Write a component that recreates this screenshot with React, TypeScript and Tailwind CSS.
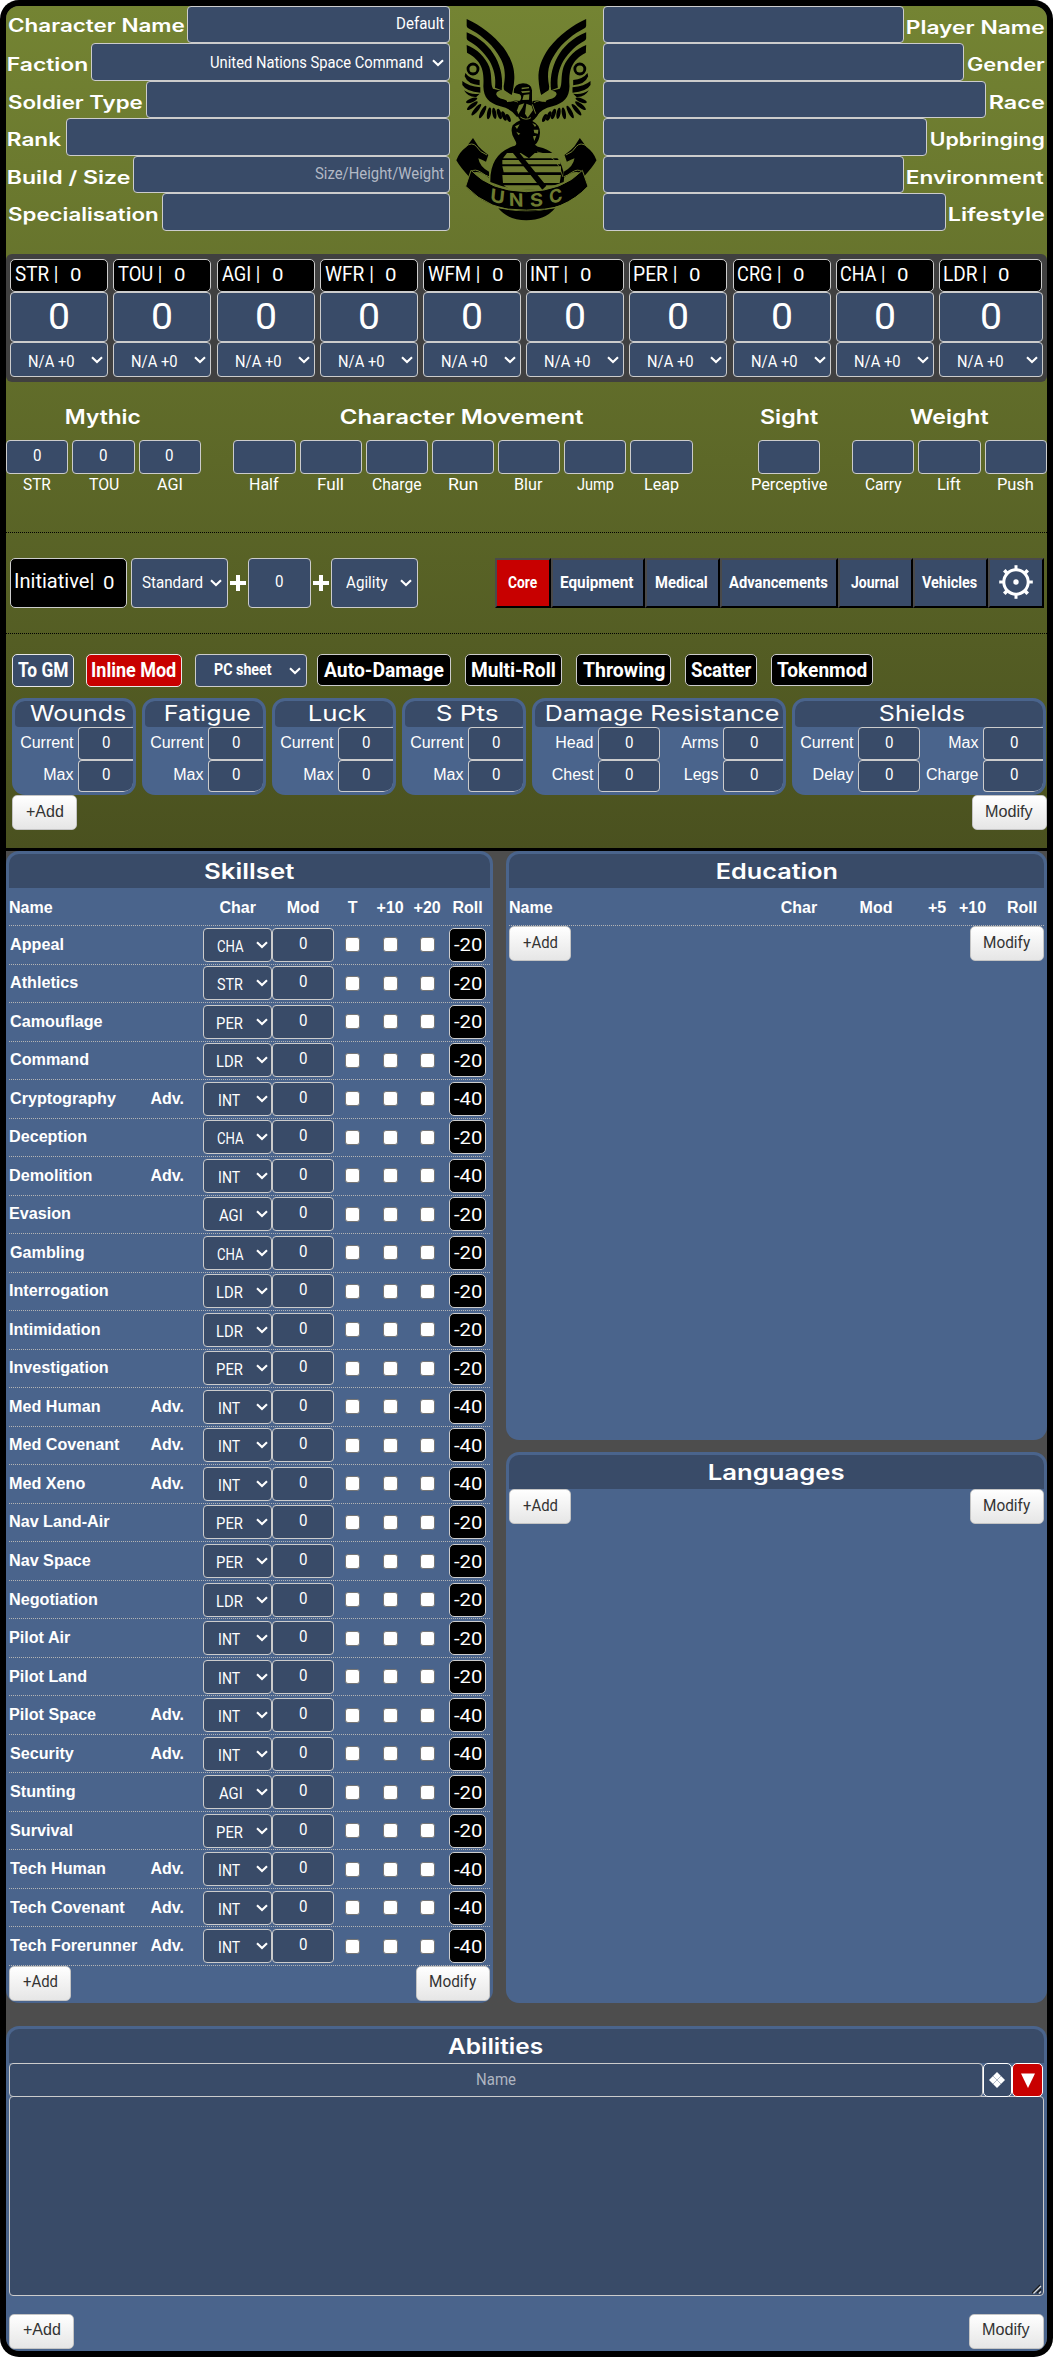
import React from "react";

/* ---------- text ---------- */

type Face = "wide" | "body" | "plain";

const FACES: Record<Face, { css: string; cls: string }> = {
  wide: { css: 'Inter, sans-serif', cls: "font-['Inter',sans-serif]" },
  body: { css: 'Roboto, sans-serif', cls: "font-['Roboto',sans-serif]" },
  plain: { css: '"Liberation Sans", sans-serif', cls: "font-['Liberation_Sans',sans-serif]" },
};

const ctx = document.createElement("canvas").getContext("2d")!;

/* A single line of text whose inked width is fitted to `w` pixels. */
function Fit({
  t,
  w,
  size = 16,
  weight = 400,
  face = "body",
  dy = 0,
  cls = "",
}: {
  t: string;
  w: number;
  size?: number;
  weight?: number;
  face?: Face;
  dy?: number;
  cls?: string;
}) {
  ctx.font = `${weight} ${size}px ${FACES[face].css}`;
  const m = ctx.measureText(t);
  const s = w / (m.actualBoundingBoxLeft + m.actualBoundingBoxRight);
  return (
    <span className={`block shrink-0 text-left leading-5 whitespace-pre ${FACES[face].cls} ${cls}`} style={{ width: w }}>
      <span
        className="inline-block origin-left"
        style={{
          fontSize: size,
          fontWeight: weight,
          transform: `translate(${m.actualBoundingBoxLeft * s}px, ${dy}px) scaleX(${s})`,
        }}
      >
        {t}
      </span>
    </span>
  );
}

const Chevron = ({ cls = "" }: { cls?: string }) => (
  <svg className={`h-[8px] w-[12px] shrink-0 ${cls}`} viewBox="0 0 12 8" fill="none" stroke="white" strokeWidth="2.1">
    <path d="M1 1.2 L6 6 L11 1.2" />
  </svg>
);

const FIELD = "border border-[#cccccc] bg-[#394b68] rounded-[4px]";
const ROLL = "border border-[#cccccc] bg-black rounded-[5px]";

/* ---------- emblem ---------- */

const OLIVE = "#6e7b30";

const WingHalf = () => (
  <g>
    <path d="M79 56 C120 74 160 105 190 142 C215 178 223 205 222 235 Q220 265 214 284 L192 270 Q190 268 190 258 C198 215 192 190 172 160 C150 126 115 100 84 84 Q79 81 79 76Z" />
    <path d="M79 96 C120 112 150 142 165 170 C184 205 188 240 184 270 L164 262 C168 232 160 204 148 183 C130 153 105 132 85 122 Q79 119 79 114Z" />
    <path d="M79 134 C110 146 135 170 147 200 C156 228 150 252 158 265 L182 271 Q166 272 168 283 Q174 298 206 298 L240 302 L240 345 L230 350 Q214 325 180 318 C145 308 130 292 129 258 C131 225 128 205 115 186 C104 170 90 163 80 157Z" />
    <circle cx="98" cy="206" r="15" fill="none" stroke="black" strokeWidth="8.5" />
    <path d="M75 218 Q88 236 118 239 V255 Q82 252 73 228Z" />
    <path d="M66 242 Q84 258 120 261 V277 Q78 274 66 254Z" />
    <path d="M71 270 Q90 284 118 280 L108 290 Q84 292 71 270Z" />
    <g>
      <ellipse cx="94" cy="300" rx="18" ry="6" transform="rotate(-22 94 300)" />
      <ellipse cx="96" cy="316" rx="20" ry="6" transform="rotate(-38 96 316)" />
      <ellipse cx="108" cy="328" rx="22" ry="6" transform="rotate(-50 108 328)" />
      <ellipse cx="127" cy="335" rx="21" ry="6" transform="rotate(-62 127 335)" />
      <ellipse cx="146" cy="339" rx="18" ry="6" transform="rotate(-80 146 339)" />
      <ellipse cx="162" cy="339" rx="17" ry="6" transform="rotate(80 162 339)" />
      <ellipse cx="177" cy="341" rx="16" ry="6" transform="rotate(72 177 341)" />
      <ellipse cx="191" cy="347" rx="15" ry="6" transform="rotate(66 191 347)" />
      <ellipse cx="204" cy="353" rx="13" ry="5.5" transform="rotate(66 204 353)" />
    </g>
    {/* side ribbon */}
    <path d="M48 480 Q56 456 78 440 L98 413 L114 438 Q124 450 144 464 L137 484 Q124 478 114 474 Q118 500 146 514 L146 532 Q116 508 96 518 L89 532 Q60 502 48 480Z" />
    <path d="M76 438 Q96 424 108 438 Q118 456 140 464 M92 514 Q104 504 122 516 Q136 526 148 530" fill="none" stroke={OLIVE} strokeWidth="3" />
    <path d="M176 276 Q196 268 206 282 Q214 292 230 294 Q212 312 194 298 Q180 290 176 276Z" fill={OLIVE} />
    <path d="M200 304 Q220 296 236 308" fill="none" stroke={OLIVE} strokeWidth="3" />
  </g>
);

const Emblem = () => (
  <svg className="h-[207px] w-[142px]" viewBox="47 50 426 621">
    <WingHalf />
    <g transform="translate(516.5 0) scale(-1 1)">
      <WingHalf />
    </g>
    <path d="M220 277 Q220 250 248 249 Q274 250 275 270 L275 306 Q292 312 300 328 Q292 350 276 362 Q300 374 299 398 Q297 424 284 433 Q292 440 296 440 Q345 450 364 496 Q374 522 370 545 Q258 590 150 545 Q148 462 218 438 Q234 434 224 420 Q208 396 217 375 Q228 364 240 360 Q222 340 232 306 L240 300 Q246 288 238 282Z" />
    <g fill={OLIVE}>
      <path d="M236 314 L252 309 L246 322 L234 342 L230 330Z" />
      <path d="M258 310 L274 316 L278 330 L262 352 L254 340Z" />
      <path d="M244 262 L266 260 L266 264 L244 267Z M242 273 L268 271 V276 L246 278Z M250 284 L267 282 L266 298 L246 299Z" />
      <path d="M224 378 L238 372 L230 386Z M228 394 L240 400 L234 404Z M276 368 L288 374 L284 380Z M280 388 L294 388 L293 400 L282 398Z M278 408 L288 406 L282 422Z" />
    </g>
    <path d="M276 312 L286 340 M240 350 Q256 362 272 352" stroke={OLIVE} strokeWidth="3" fill="none" />
    <path d="M200 458 H338 Q350 466 354 474 H188Z M186 479 H358 L361 492 H186Z M186 498 H362 V516 H190Z M186 524 H362 L358 548 H188Z M190 555 H352 L330 566 L220 570 Q196 562 190 555Z" fill={OLIVE} />
    <path d="M216 456 L236 456 L318 556 L306 568Z M232 452 L266 474 L290 452Z" />
    <path d="M290 455 Q352 462 368 530" fill="none" stroke={OLIVE} strokeWidth="2.5" />
    <path d="M92 510 Q150 572 258 574 Q368 572 426 510 L443 558 Q372 634 258 634 Q146 632 76 558Z" stroke={OLIVE} strokeWidth="3" />
    <g
      fill={OLIVE}
      fontFamily="Inter, sans-serif"
      fontWeight="700"
      fontSize="54"
      textAnchor="middle"
    >
      <text transform="translate(170 607) rotate(14) skewX(8) scale(1.12 1)">U</text>
      <text transform="translate(228 618) rotate(4) skewX(5) scale(1.06 1)">N</text>
      <text transform="translate(289 618) rotate(-5) skewX(-4) scale(1.12 1)">S</text>
      <text transform="translate(348 606) rotate(-14) skewX(-8) scale(1.02 1)">C</text>
    </g>
    <path d="M174 624 Q258 642 344 624 Q314 660 258 660 Q204 660 174 624Z" />
    <path d="M150 617 Q258 642 368 617" fill="none" stroke={OLIVE} strokeWidth="3" />
  </svg>
);

/* ---------- identity ---------- */

const LEFT: { label: string; lw: number; fw: number; h: string; body?: React.ReactNode }[] = [
  { label: "Character Name", lw: 176, fw: 263, h: "h-[37px]", body: <Fit t="Default" w={47} dy={-1.5} /> },
  {
    label: "Faction",
    lw: 79,
    fw: 359,
    h: "h-[38px]",
    body: (
      <>
        <Fit t="United Nations Space Command" w={211} dy={0.5} />
        <Chevron cls="ml-[10px] mt-[1px]" />
      </>
    ),
  },
  { label: "Soldier Type", lw: 134, fw: 304, h: "h-[37px]" },
  { label: "Rank", lw: 54, fw: 384, h: "h-[38px]" },
  {
    label: "Build / Size",
    lw: 121.5,
    fw: 317,
    h: "h-[37px]",
    body: <Fit t="Size/Height/Weight" w={129} dy={-1} cls="text-[#b3b9c5]" />,
  },
  { label: "Specialisation", lw: 149.5, fw: 288, h: "h-[38px]" },
];

const RIGHT = [
  { label: "Player Name", lw: 137, fw: 300.5, h: "h-[37px]" },
  { label: "Gender", lw: 77.5, fw: 360.5, h: "h-[38px]" },
  { label: "Race", lw: 54, fw: 382.5, h: "h-[37px]" },
  { label: "Upbringing", lw: 113.5, fw: 323.5, h: "h-[38px]" },
  { label: "Environment", lw: 137.5, fw: 300.5, h: "h-[37px]" },
  { label: "Lifestyle", lw: 95, fw: 342.5, h: "h-[38px]" },
];

const Identity = () => (
  <div className="flex h-[248px] items-start">
    <div className="w-[444px]">
      {LEFT.map((r, i) => (
        <div key={r.label} className={`flex items-center justify-between pl-[2px] ${r.h}`}>
          <Fit t={r.label} w={r.lw} size={18} weight={600} face="wide" dy={i === 0 ? 0.5 : 3} />
          <div className={`flex h-full items-center justify-end pr-[5px] ${FIELD}`} style={{ width: r.fw }}>
            {r.body}
          </div>
        </div>
      ))}
    </div>
    <div className="flex w-[153px] justify-center pt-[11px]">
      <Emblem />
    </div>
    <div className="w-[441px]">
      {RIGHT.map((r) => (
        <div key={r.label} className={`flex items-center justify-between ${r.h}`}>
          <div className={`h-full ${FIELD}`} style={{ width: r.fw }} />
          <Fit t={r.label} w={r.lw} size={18} weight={600} face="wide" dy={2.5} />
        </div>
      ))}
    </div>
    <div className="w-[3px]" />
  </div>
);

/* ---------- characteristics ---------- */

const STATS: [string, number][] = [
  ["STR |", 42.5],
  ["TOU |", 43.5],
  ["AGI |", 37.5],
  ["WFR |", 48],
  ["WFM |", 51.5],
  ["INT |", 36.5],
  ["PER |", 42.5],
  ["CRG |", 42.5],
  ["CHA |", 43.5],
  ["LDR |", 42],
];

const Stats = () => (
  <div className="flex h-[128px] gap-[5.2px] rounded-md bg-[#404040] pt-[5px] pr-[4px] pl-[4.3px]">
    {STATS.map(([s, w], i) => (
      <div key={s} className={i === 9 ? "flex-1" : "w-[98px]"}>
        <div className={`flex h-[33px] items-center pl-[4px] ${ROLL} ${i === 9 ? "mr-[1px]" : ""}`}>
          <Fit t={s} w={w} size={20} dy={-1} />
          <Fit t="0" w={10.5} size={17.5} cls="ml-[12.5px]" />
        </div>
        <div className={`flex h-[50px] items-center justify-center ${FIELD}`}>
          <Fit t="0" w={18} size={37} dy={3} />
        </div>
        <div className={`flex h-[35px] items-center pl-[18px] ${FIELD}`}>
          <Fit t="N/A +0" w={45.5} dy={1.5} />
          <Chevron cls="mr-[4px] ml-auto" />
        </div>
      </div>
    ))}
  </div>
);

/* ---------- derived values ---------- */

type Cell = [string, number, string?];

const Group = ({ title, w, cells, cls }: { title: string; w: number; cells: Cell[]; cls: string }) => (
  <div className={`flex flex-col items-center ${cls}`}>
    <div className="mt-[24px] flex h-[33px] justify-center pr-px">
      <Fit t={title} w={w} size={20} weight={600} face="wide" />
    </div>
    <div className="flex gap-[4px]">
      {cells.map(([l, lw, v]) => (
        <div key={l} className="flex w-[62.2px] flex-col items-center">
          <div className={`flex h-[34px] w-full items-center justify-center ${FIELD}`}>{v && <Fit t={v} w={8.5} dy={-1} />}</div>
          <Fit t={l} w={lw} cls="mt-[3px]" dy={-2} />
        </div>
      ))}
    </div>
  </div>
);

const Derived = () => (
  <div className="flex h-[150px] items-start">
    <Group title="Mythic" w={74} cls="w-[195px] pt-[1px]" cells={[["STR", 28, "0"], ["TOU", 30, "0"], ["AGI", 24.5, "0"]]} />
    <Group
      title="Character Movement"
      w={242.5}
      cls="ml-[32px] w-[460px] pt-[1px]"
      cells={[["Half", 29], ["Full", 25], ["Charge", 49], ["Run", 28.5], ["Blur", 28], ["Jump", 37], ["Leap", 34]]}
    />
    <Group title="Sight" w={58} cls="ml-[65px] w-[62px] pt-[1px]" cells={[["Perceptive", 75]]} />
    <Group title="Weight" w={78.5} cls="ml-[32px] w-[195px] pt-[1px]" cells={[["Carry", 37], ["Lift", 22.5], ["Push", 35]]} />
  </div>
);

/* ---------- initiative and tabs ---------- */

const TABS: [string, number, string][] = [
  ["Core", 29.5, "w-[56px] bg-[#c80000]"],
  ["Equipment", 73, "w-[94px] bg-[#394b68]"],
  ["Medical", 51.5, "w-[75px] bg-[#394b68]"],
  ["Advancements", 98.5, "w-[118px] bg-[#394b68]"],
  ["Journal", 47.5, "w-[75px] bg-[#394b68]"],
  ["Vehicles", 55, "w-[75px] bg-[#394b68]"],
];

const BEVEL = "border-2 border-t-[#4a4a4a] border-l-[#4a4a4a] border-r-black border-b-black";

const Gear = () => (
  <svg className="size-[36px]" viewBox="-18 -18 36 36" fill="none" stroke="white">
    <circle r="12.2" strokeWidth="3" />
    <circle r="2.7" fill="white" stroke="none" />
    {[0, 45, 90, 135, 180, 225, 270, 315].map((a) => (
      <path key={a} d={a % 90 ? "M0 -12.5 V-16.6" : "M0 -12 V-16.8"} strokeWidth={a % 90 ? 3.6 : 3} transform={`rotate(${a})`} />
    ))}
  </svg>
);

const Plus = ({ cls }: { cls: string }) => (
  <svg className={`size-[16px] ${cls}`} viewBox="0 0 16 16" stroke="white" strokeWidth="4">
    <path d="M8 0 V16 M0 8 H16" />
  </svg>
);

const Bar = () => (
  <div className="flex h-[102px] items-center border-y border-dotted border-black pr-[3px] pl-[4px]">
    <div className={`flex h-[50px] w-[117px] items-center pl-[4px] ${ROLL}`}>
      <Fit t="Initiative|" w={78.5} size={20} dy={-1} />
      <Fit t="0" w={10.5} size={17.5} cls="ml-[9px]" dy={-0.5} />
    </div>
    <div className={`ml-[4px] flex h-[50px] w-[97px] items-center pl-[10px] ${FIELD}`}>
      <Fit t="Standard" w={60} />
      <Chevron cls="ml-[8px]" />
    </div>
    <Plus cls="ml-[2px]" />
    <div className={`ml-[2px] flex h-[50px] w-[63px] items-center justify-center ${FIELD}`}>
      <Fit t="0" w={8.5} dy={-1} />
    </div>
    <Plus cls="ml-[2px]" />
    <div className={`ml-[2px] flex h-[50px] w-[87px] items-center pl-[14px] ${FIELD}`}>
      <Fit t="Agility" w={42} />
      <Chevron cls="ml-[12px]" />
    </div>
    <div className="ml-auto flex">
      {TABS.map(([t, w, c]) => (
        <div key={t} className={`flex h-[50px] items-center justify-center pr-[1.5px] ${BEVEL} ${c}`}>
          <Fit t={t} w={w} weight={700} dy={-0.5} />
        </div>
      ))}
      <div className={`flex h-[50px] w-[56px] items-center justify-center bg-[#394b68] pb-[2px] ${BEVEL}`}>
        <Gear />
      </div>
    </div>
  </div>
);

/* ---------- toggles ---------- */

const MACROS: [string, number, string][] = [
  ["Auto-Damage", 120, "ml-[10px] w-[134px]"],
  ["Multi-Roll", 83.5, "ml-[14px] w-[97px]"],
  ["Throwing", 82, "ml-[14px] w-[95px]"],
  ["Scatter", 61, "ml-[14px] w-[72px]"],
  ["Tokenmod", 90, "ml-[14px] w-[102px]"],
];

const Toggles = () => (
  <div className="mt-[20px] flex h-[44px] items-start pl-[6px]">
    <div className="flex h-[33px] w-[62px] items-center justify-center rounded-[5px] border border-[#e8e8e8] bg-[#394b68]">
      <Fit t="To GM" w={50} size={20} weight={700} dy={0} />
    </div>
    <div className="ml-[12px] flex h-[33px] w-[96px] items-center justify-center rounded-[5px] border border-[#e8e8e8] bg-[#c80000]">
      <Fit t="Inline Mod" w={84} size={20} weight={700} dy={0} />
    </div>
    <div className={`ml-[13px] flex h-[33px] w-[112px] items-center pl-[19px] ${FIELD}`}>
      <Fit t="PC sheet" w={57} weight={700} dy={-1} />
      <Chevron cls="mr-[5px] ml-auto" />
    </div>
    {MACROS.map(([t, w, c]) => (
      <div key={t} className={`flex h-[32px] items-center justify-center ${ROLL} ${c}`}>
        <Fit t={t} w={w} size={20} weight={700} dy={0.5} />
      </div>
    ))}
  </div>
);

/* ---------- trackers ---------- */

const Label = ({ t }: { t: string }) => (
  <span className="flex-1 pr-[4.5px] pb-[2px] text-right font-['Liberation_Sans',sans-serif] text-base leading-5 whitespace-nowrap">
    {t}
  </span>
);

const Tracker = ({ title, tw, pairs, cls, last }: { title: string; tw: number; pairs: string[][]; cls: string; last: string }) => (
  <div className={`h-[97px] overflow-hidden rounded-[13px] border-[3px] border-[#4a648c] bg-[#4a648c] ${cls}`}>
    <div className="flex h-[26px] items-center justify-center rounded-t-[9px] rounded-b-[4px] bg-[#394b68] pl-[7px]">
      <Fit t={title} w={tw} size={21} weight={400} face="wide" dy={0} />
    </div>
    {pairs.map((row, r) => (
      <div key={r} className={r ? "flex h-[32px] items-center" : "flex h-[33px] items-center"}>
        {row.map((l, i) => {
          const end = i === row.length - 1;
          return (
            <React.Fragment key={l}>
              <Label t={l} />
              <div
                className={`flex h-full items-center border border-[#cccccc] bg-[#394b68] ${
                  end ? `border-r-0 rounded-l-[4px] ${last} ${r ? "rounded-br-[9px]" : ""}` : "w-[62px] justify-center rounded-[4px]"
                }`}
              >
                <Fit t="0" w={8.5} dy={-1} cls={end ? (row.length > 1 ? "ml-[26px]" : "ml-[23px]") : ""} />
              </div>
            </React.Fragment>
          );
        })}
      </div>
    ))}
  </div>
);

const SINGLE = [["Current"], ["Max"]];

const Trackers = () => (
  <div className="flex gap-[6px] pl-[6px]">
    <Tracker title="Wounds" tw={96} pairs={SINGLE} cls="w-[124px]" last="w-[55px]" />
    <Tracker title="Fatigue" tw={85.5} pairs={SINGLE} cls="w-[124px]" last="w-[55px]" />
    <Tracker title="Luck" tw={58} pairs={SINGLE} cls="w-[124px]" last="w-[55px]" />
    <Tracker title="S Pts" tw={61.5} pairs={SINGLE} cls="w-[124px]" last="w-[55px]" />
    <Tracker title="Damage Resistance" tw={233} pairs={[["Head", "Arms"], ["Chest", "Legs"]]} cls="w-[254px]" last="w-[60px]" />
    <Tracker title="Shields" tw={85} pairs={[["Current", "Max"], ["Delay", "Charge"]]} cls="w-[254px]" last="w-[60px]" />
  </div>
);

/* ---------- add / modify ---------- */

const BTN =
  "flex h-[35px] items-center justify-center rounded-[5px] border border-[#c4c4c4] bg-linear-to-b from-white to-[#e6e6e6] text-[#333333]";

const AddModify = ({ plain = false, cls = "" }: { plain?: boolean; cls?: string }) => (
  <div className={`flex justify-between ${cls}`}>
    <div className={`${BTN} ${plain ? "w-[65px]" : "w-[62px]"}`}>
      <Fit t="+Add" w={plain ? 37 : 34} face={plain ? "plain" : "body"} dy={-1} />
    </div>
    <div className={`${BTN} ${plain ? "w-[75px]" : "w-[74px]"}`}>
      <Fit t="Modify" w={46.6} face={plain ? "plain" : "body"} dy={-1} />
    </div>
  </div>
);

/* ---------- panels ---------- */

const Panel = ({
  title,
  tw,
  cls,
  head = "",
  children,
}: {
  title: string;
  tw: number;
  cls: string;
  head?: string;
  children?: React.ReactNode;
}) => (
  <div className={`rounded-[13px] bg-[#4a648c] p-[3px] ${cls}`}>
    <div className={`flex h-[34px] items-center justify-center rounded-t-[10px] bg-[#394b68] ${head}`}>
      <Fit t={title} w={tw} size={21} weight={600} face="wide" dy={0.8} />
    </div>
    {children}
  </div>
);

const Head = ({ t }: { t: string }) => <span className="text-center">{t}</span>;

const GRID = "grid grid-cols-[141.5px_52.7px_69px_62px_37px_38px_36px_1fr] items-center border-b border-dotted border-[#b4b4b4]";
const BOLD = "font-['Liberation_Sans',sans-serif] text-base font-bold leading-5";

const CHAR_W: Record<string, number> = { CHA: 27, STR: 26, PER: 26, LDR: 26, INT: 21.5, AGI: 22.5 };

const SKILLS: [string, string, boolean?][] = [
  ["Appeal", "CHA"],
  ["Athletics", "STR"],
  ["Camouflage", "PER"],
  ["Command", "LDR"],
  ["Cryptography", "INT", true],
  ["Deception", "CHA"],
  ["Demolition", "INT", true],
  ["Evasion", "AGI"],
  ["Gambling", "CHA"],
  ["Interrogation", "LDR"],
  ["Intimidation", "LDR"],
  ["Investigation", "PER"],
  ["Med Human", "INT", true],
  ["Med Covenant", "INT", true],
  ["Med Xeno", "INT", true],
  ["Nav Land-Air", "PER"],
  ["Nav Space", "PER"],
  ["Negotiation", "LDR"],
  ["Pilot Air", "INT"],
  ["Pilot Land", "INT"],
  ["Pilot Space", "INT", true],
  ["Security", "INT", true],
  ["Stunting", "AGI"],
  ["Survival", "PER"],
  ["Tech Human", "INT", true],
  ["Tech Covenant", "INT", true],
  ["Tech Forerunner", "INT", true],
];

/* Inked width of a skill name in 16px bold, widened slightly. */
const nameWidth = (name: string) => {
  ctx.font = `700 16px ${FACES.plain.css}`;
  const m = ctx.measureText(name);
  return (m.actualBoundingBoxLeft + m.actualBoundingBoxRight) * 1.01;
};

const Box = () => <div className="size-[15px] justify-self-center rounded-[3px] border border-[#767676] bg-white" />;

const Skillset = () => (
  <Panel title="Skillset" tw={91} cls="h-[1152px] w-[487px]">
    <div className={`h-[38px] pt-[2px] ${GRID} ${BOLD}`}>
      <span>Name</span>
      <span />
      {["Char", "Mod", "T", "+10", "+20", "Roll"].map((h) => (
        <Head key={h} t={h} />
      ))}
    </div>
    {SKILLS.map(([name, ch, adv]) => (
      <div key={name} className={`h-[38.52px] ${GRID}`}>
        <Fit t={name} w={nameWidth(name)} weight={700} face="plain" cls="ml-[0.7px]" />
        <span className={BOLD}>{adv ? "Adv." : ""}</span>
        <div className={`flex h-[34px] items-center ${FIELD}`}>
          <div className="flex w-[52px] justify-center">
            <Fit t={ch} w={CHAR_W[ch]} dy={2} />
          </div>
          <Chevron />
        </div>
        <div className={`flex h-[34px] w-[61.5px] items-center justify-center ${FIELD}`}>
          <Fit t="0" w={8.5} dy={-1} />
        </div>
        <Box />
        <Box />
        <Box />
        <div className={`flex h-[34px] w-[37px] items-center justify-center justify-self-center ${ROLL}`}>
          <Fit t={adv ? "-40" : "-20"} w={27.5} size={17.5} dy={1} />
        </div>
      </div>
    ))}
    <AddModify />
  </Panel>
);

const Education = () => (
  <Panel title="Education" tw={120} cls="h-[589px]">
    <div
      className={`grid h-[38px] grid-cols-[240px_100px_54px_71px_42px_28px] items-center border-b border-dotted border-[#b4b4b4] pt-[2px] ${BOLD}`}
    >
      <span>Name</span>
      <Head t="Char" />
      <Head t="Mod" />
      <span className="pl-[25px]">+5</span>
      <span className="-ml-[15px]">+10</span>
      <span className="-ml-[9px]">Roll</span>
    </div>
    <AddModify />
  </Panel>
);

const Abilities = () => (
  <Panel title="Abilities" tw={94.5} cls="mt-[23px] h-[325px]" head="pr-[63px]">
    <div className="flex h-[34px]">
      <div className={`flex w-[973.5px] items-center justify-center ${FIELD}`}>
        <Fit t="Name" w={38.5} dy={0} cls="text-[#aeb5c1]" />
      </div>
      <div className="flex w-[29.5px] items-center justify-center rounded-[5px] border border-white bg-[#394b68]">
        <svg className="size-[18px]" viewBox="0 0 18 18">
          <path d="M9 1 L17 9 L9 17 L1 9Z" fill="white" />
          <path d="M5 5 L13 13 M13 5 L5 13" stroke="#a9b2c0" strokeWidth="0.9" />
        </svg>
      </div>
      <div className="flex w-[31px] items-center justify-center rounded-[5px] border border-white bg-[#c80000]">
        <svg className="h-[15px] w-[16px]" viewBox="0 0 16 15">
          <path d="M1 0.5 H15 L8 15Z" fill="white" />
        </svg>
      </div>
    </div>
    <div className={`-mt-px flex h-[200px] items-end justify-end ${FIELD}`}>
      <svg className="mb-px mr-px size-[10px]" viewBox="0 0 10 10" strokeWidth="1.2">
        <path d="M0 9 L8 1 M5 9 L9 5" stroke="#1a1a1a" />
        <path d="M1.5 9.5 L9 2 M7 9.5 L9 7.5" stroke="#dddddd" />
      </svg>
    </div>
    <AddModify plain cls="mt-[17.5px]" />
  </Panel>
);

/* ---------- sheet ---------- */

export default function App() {
  return (
    <div className="h-[2357px] w-[1053px] bg-white text-white">
      <div className="h-full overflow-hidden rounded-[19px] bg-black p-[6px]">
        <div className="h-full overflow-hidden rounded-[13px] bg-[#4d4d4d]">
          <div className="h-[845px] border-b-[3px] border-black bg-linear-to-b from-[#748433] to-[#4a511f]">
            <Identity />
            <Stats />
            <Derived />
            <Bar />
            <Toggles />
            <Trackers />
            <AddModify plain cls="pl-[6px]" />
          </div>
          <div className="flex gap-[13px]">
            <Skillset />
            <div className="flex flex-1 flex-col gap-[12px]">
              <Education />
              <Panel title="Languages" tw={135} cls="h-[551px]">
                <AddModify />
              </Panel>
            </div>
          </div>
          <Abilities />
        </div>
      </div>
    </div>
  );
}
